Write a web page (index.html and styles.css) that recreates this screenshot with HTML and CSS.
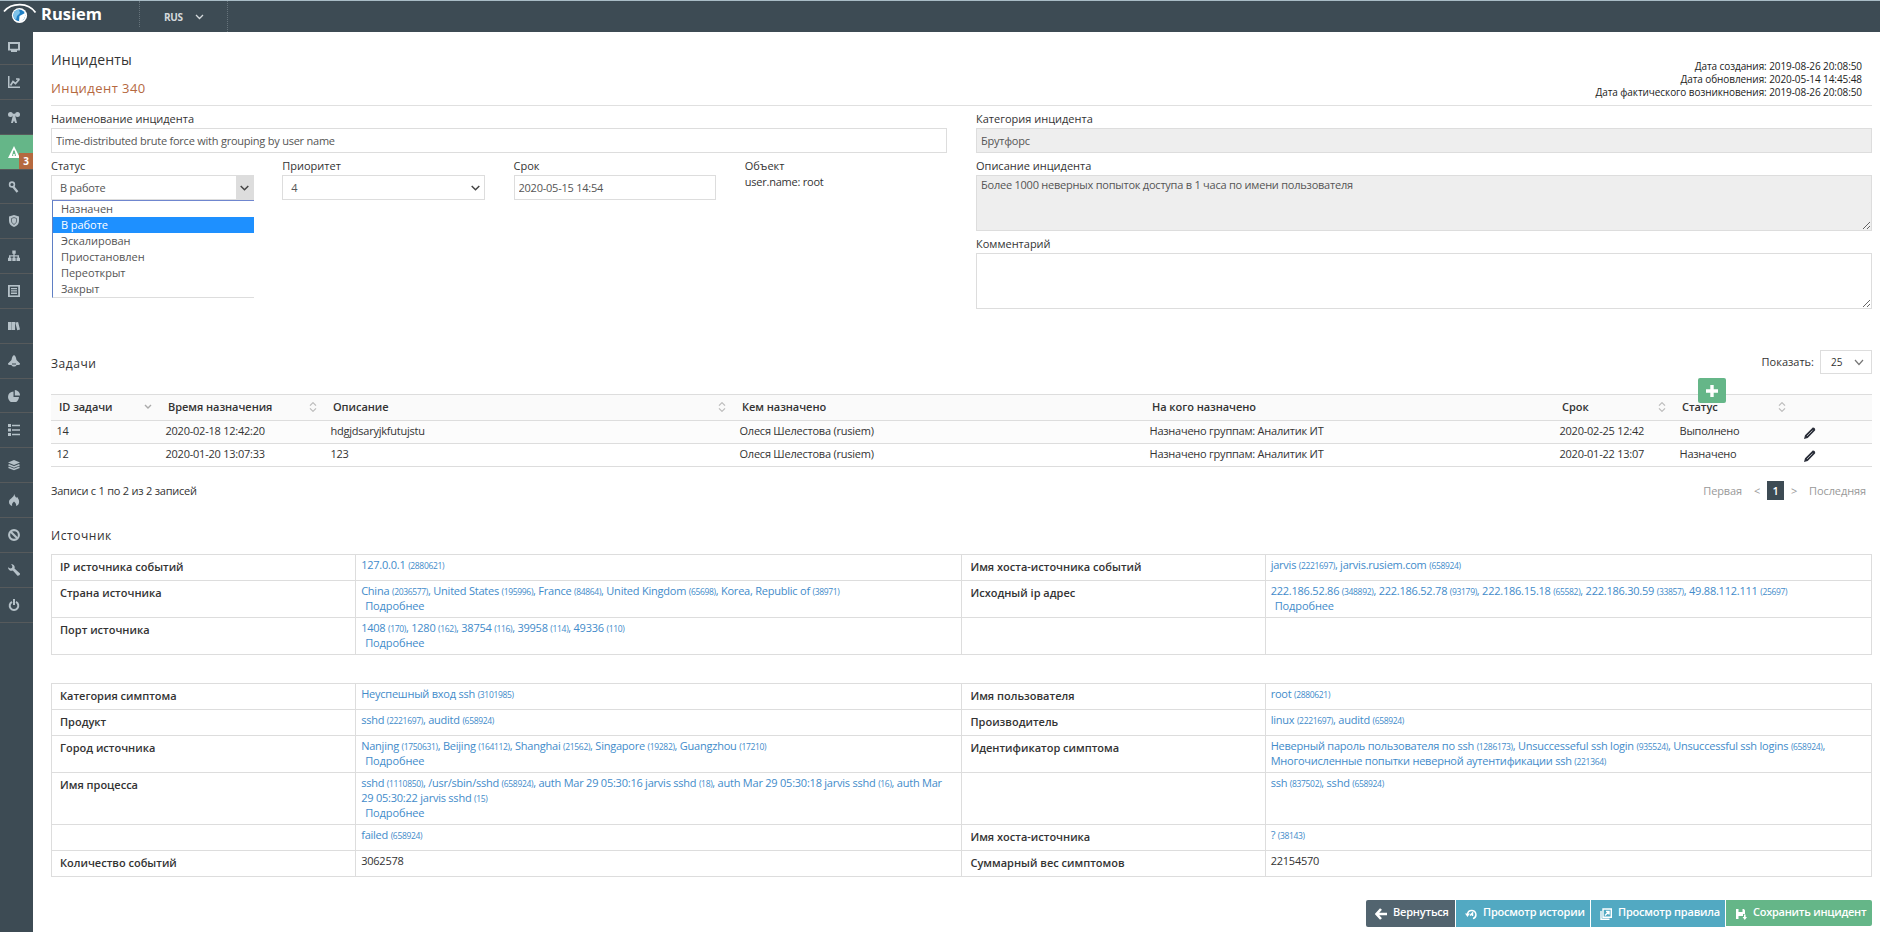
FILE: index.html
```html
<!DOCTYPE html>
<html lang="ru">
  <head>
    <meta charset="UTF-8" />
    <meta name="viewport" content="width=device-width, initial-scale=1.0" />
    <title>Rusiem - Инцидент 340</title>
    <link rel="stylesheet" href="styles.css">
  </head>
  <body>
    <header class="topbar">
      <a class="logo" href="#">
        <svg width="34" height="22" viewBox="0 0 34 22">
          <circle cx="16.500" cy="12.500" r="7.600" fill="#fff" />
          <circle cx="16.300" cy="12.300" r="5.900" fill="#1f7fc4" />
          <path d="M10.500 11a6 6 0 0 1 5.500-4.500L17 10l-3 3-1 4a6 6 0 0 1-2.500-6z" fill="#7fc3ea" />
          <path d="M16.500 13l5.500-3a6.500 6.500 0 0 1-6 8.500z" fill="#fff" />
          <path d="M1 8.500Q7 1.500 17 1.700T32.500 9.500" fill="none" stroke="#fff" stroke-width="1.800" />
        </svg>
        <span>Rusiem</span>
      </a>
      <div class="lang">
        <span>RUS</span>
        <svg width="9" height="6" viewBox="0 0 9 6"><path d="M1 1l3.500 3.500L8 1" fill="none" stroke="#d5dadd" stroke-width="1.300" /></svg>
      </div>
    </header>

    <div class="layout">
      <nav class="sidebar">
        <a href="#"><svg viewBox="0 0 12 12"><path d="M0 1h12v8.500H9V11H3V9.500H0zM2 3v4.700h8V3z" fill-rule="evenodd" /></svg></a>
        <a href="#"><svg viewBox="0 0 12 12"><path d="M0 0h1.500v10.500H12V12H0z" /><path d="M2.500 9.500l2.500-4 2.500 2L11.500 3M8 3h3.500" fill="none" stroke="currentColor" stroke-width="1.700" /></svg></a>
        <a href="#"><svg viewBox="0 0 12 12"><path d="M5 4h2l2 8H7.200L6 9.500 4.800 12H3z" /><circle cx="2.500" cy="3.500" r="2.500" /><circle cx="9.500" cy="3.500" r="2.500" /><circle cx="6" cy="4" r="1.500" /></svg></a>
        <a class="active" href="#"><svg viewBox="0 0 12 12"><path d="M6 0l6 12H0zM5.300 4.500L4 10h1.200V8h1.600v2H8L6.700 4.500z" fill-rule="evenodd" /></svg><b class="badge">3</b></a>
        <a href="#"><svg viewBox="0 0 12 12"><circle cx="4" cy="3.500" r="2.400" fill="none" stroke="currentColor" stroke-width="1.600" /><path d="M5 5.500L9.500 11" fill="none" stroke="currentColor" stroke-width="2.300" /></svg></a>
        <a href="#"><svg viewBox="0 0 12 12"><path d="M6 0l5 1.500V6c0 3-2 5-5 6-3-1-5-3-5-6V1.500z" /><path d="M6 2.500l2.500 1V6c0 1.500-1 2.700-2.500 3.500C4.500 8.700 3.500 7.500 3.500 6V3.500z" fill="none" stroke="#3d4b54" stroke-width=".7" /></svg></a>
        <a href="#"><svg viewBox="0 0 12 12"><path d="M4.300.5h3.400v3.300H6.700v1.400H11v2.600h1v3.200H8.500V7.800h1V6.500H6.700v1.300h1V11H4.300V7.800h1V6.500H2.500v1.300h1V11H0V7.800h1V5.200h4.300V3.800h-1z" /></svg></a>
        <a href="#"><svg viewBox="0 0 12 12"><path d="M0 0h12v12H0z" /><path d="M1.800 1.600h8.400v8.800H1.800z" fill="#3d4b54" /><path d="M3 3h6v1.300H3zM3 5.300h6v1.300H3zM3 7.600h6v1.500H3z" /></svg></a>
        <a href="#"><svg viewBox="0 0 12 12"><path d="M0 2h3.400v8H0zM3.700 2h3.400v8H3.700zM7.300 2.600l2.800-.7L12 9.400l-2.800.8z" /></svg></a>
        <a href="#"><svg viewBox="0 0 12 12"><path d="M6 0c2 1 2 3 2.500 5L12 8.500c.3 1-.6 1.500-1.500 1.500H8.500C8 12 4 12 3.500 10h-2C.6 10-.3 9.500 0 8.500L3.500 5C4 3 4 1 6 0zM4 8.500h4V9.500H4z" fill-rule="evenodd" /></svg></a>
        <a href="#"><svg viewBox="0 0 12 12"><path d="M5.500 1.500V7H11a5.500 5.500 0 1 1-5.500-5.500z" /><path d="M6.800 0A5.300 5.300 0 0 1 12 5.500H6.800z" /></svg></a>
        <a href="#"><svg viewBox="0 0 12 12"><path d="M0 0h3v3H0zM0 4.500h3v3H0zM0 9h3v3H0zM4 .8h8v1.500H4zM4 5.300h8v1.500H4zM4 9.800h8v1.500H4z" /></svg></a>
        <a href="#"><svg viewBox="0 0 12 12"><path d="M6 1l6 2.500L6 6 0 3.500z" /><path d="M.5 5.700L6 8l5.500-2.300M.5 8.200L6 10.500l5.500-2.300" fill="none" stroke="currentColor" stroke-width="1.600" /></svg></a>
        <a href="#"><svg viewBox="0 0 12 12"><path d="M6.300 0c.4 2 1.200 2.700 2 3.700L9.200 3C10.500 5 11.500 6.500 11 8.800c-.3 1.700-1.500 2.900-3 3.200.6-2-.6-3-2-4.500C4.600 9 3.500 10 4.200 12 2.400 11.500 1 10 1 8c0-3.500 4.800-4 5.300-8z" /></svg></a>
        <a href="#"><svg viewBox="0 0 12 12"><circle cx="6" cy="6" r="4.900" fill="none" stroke="currentColor" stroke-width="2.100" /><path d="M2.500 2.500l7 7" stroke="currentColor" stroke-width="2.100" /></svg></a>
        <a href="#"><svg viewBox="0 0 12 12"><path d="M3.200 0A3.400 3.400 0 0 1 6.500 4.600L12 9.500c.2 1.400-1 2.600-2.500 2.300L4.800 6.400A3.400 3.400 0 0 1 0 3.200l2.200 1.400 1.800-.5.400-1.900z" /></svg></a>
        <a href="#"><svg viewBox="0 0 12 12"><path d="M4 2.800a4.300 4.300 0 1 0 4 0" fill="none" stroke="currentColor" stroke-width="2" /><path d="M5 0h2v6H5z" /></svg></a>
      </nav>

      <main class="content">
        <div class="page-head">
          <div>
            <h1>Инциденты</h1>
            <h2>Инцидент 340</h2>
          </div>
          <div class="dates">
            <div>Дата создания: 2019-08-26 20:08:50</div>
            <div>Дата обновления: 2020-05-14 14:45:48</div>
            <div>Дата фактического возникновения: 2019-08-26 20:08:50</div>
          </div>
        </div>

        <form class="incident">
          <div class="col">
            <label for="name">Наименование инцидента</label>
            <input id="name" type="text" value="Time-distributed brute force with grouping by user name" />
            <div class="fields">
              <div class="field">
                <label>Статус</label>
                <div class="select open">
                  <span>В работе</span>
                  <i><svg width="9" height="6" viewBox="0 0 9 6"><path d="M.7 1l3.800 3.700L8.300 1" fill="none" stroke="#444" stroke-width="1.500" /></svg></i>
                  <ul class="options">
                    <li>Назначен</li>
                    <li class="selected">В работе</li>
                    <li>Эскалирован</li>
                    <li>Приостановлен</li>
                    <li>Переоткрыт</li>
                    <li>Закрыт</li>
                  </ul>
                </div>
              </div>
              <div class="field">
                <label>Приоритет</label>
                <div class="select">
                  <span>4</span>
                  <i><svg width="9" height="6" viewBox="0 0 9 6"><path d="M.7 1l3.800 3.700L8.300 1" fill="none" stroke="#444" stroke-width="1.500" /></svg></i>
                </div>
              </div>
              <div class="field">
                <label for="term">Срок</label>
                <input id="term" type="text" value="2020-05-15 14:54" />
              </div>
              <div class="field">
                <label>Объект</label>
                <div class="object">user.name: root</div>
              </div>
            </div>
          </div>
          <div class="col">
            <label for="category">Категория инцидента</label>
            <input id="category" type="text" value="Брутфорс" disabled />
            <label for="description">Описание инцидента</label>
            <textarea id="description" disabled>Более 1000 неверных попыток доступа в 1 часа по имени пользователя</textarea>
            <label for="comment">Комментарий</label>
            <textarea id="comment"></textarea>
          </div>
        </form>

        <div class="section-head">
          <h3>Задачи</h3>
          <div class="length">
            <span>Показать:</span>
            <div class="length-select">25
              <svg width="10" height="7" viewBox="0 0 10 7"><path d="M1 1l4 4.500L9 1" fill="none" stroke="#777" stroke-width="1.200" /></svg>
            </div>
          </div>
        </div>

        <div class="tasks-wrap">
          <button class="add"><svg width="12" height="12" viewBox="0 0 12 12"><path d="M4.300 0h3.400v4.300H12v3.400H7.700V12H4.300V7.700H0V4.300h4.300z" fill="#fff" /></svg></button>
          <table class="tasks">
            <colgroup>
              <col class="c-id"><col class="c-time"><col class="c-desc"><col class="c-by"><col class="c-to"><col class="c-term"><col class="c-status"><col>
            </colgroup>
            <thead>
              <tr>
                <th class="desc">ID задачи</th>
                <th class="sort">Время назначения</th>
                <th class="sort">Описание</th>
                <th>Кем назначено</th>
                <th>На кого назначено</th>
                <th class="sort">Срок</th>
                <th class="sort">Статус</th>
                <th></th>
              </tr>
            </thead>
            <tbody>
              <tr>
                <td>14</td>
                <td>2020-02-18 12:42:20</td>
                <td>hdgjdsaryjkfutujstu</td>
                <td>Олеся Шелестова (rusiem)</td>
                <td>Назначено группам: Аналитик ИТ</td>
                <td>2020-02-25 12:42</td>
                <td>Выполнено</td>
                <td class="edit"><svg viewBox="0 0 12 12"><path d="M0 12l1-3.700L8.300 1c1-1.200 3.700.7 2.700 2.500L3.700 11z" /><path d="M3 9l5.500-5.500" stroke="#fff" stroke-width=".6" /></svg></td>
              </tr>
              <tr>
                <td>12</td>
                <td>2020-01-20 13:07:33</td>
                <td>123</td>
                <td>Олеся Шелестова (rusiem)</td>
                <td>Назначено группам: Аналитик ИТ</td>
                <td>2020-01-22 13:07</td>
                <td>Назначено</td>
                <td class="edit"><svg viewBox="0 0 12 12"><path d="M0 12l1-3.700L8.300 1c1-1.200 3.700.7 2.700 2.500L3.700 11z" /><path d="M3 9l5.500-5.500" stroke="#fff" stroke-width=".6" /></svg></td>
              </tr>
            </tbody>
          </table>
        </div>

        <div class="table-foot">
          <span>Записи с 1 по 2 из 2 записей</span>
          <div class="pager">
            <a class="first">Первая</a>
            <a class="arrow">&lt;</a>
            <a class="current">1</a>
            <a class="arrow">&gt;</a>
            <a class="last">Последняя</a>
          </div>
        </div>

        <h3 class="source-title">Источник</h3>

        <table class="details">
          <tr>
            <th>IP источника событий</th>
            <td><a>127.0.0.1 <small>(2880621)</small></a></td>
            <th>Имя хоста-источника событий</th>
            <td><a>jarvis <small>(2221697)</small>, jarvis.rusiem.com <small>(658924)</small></a></td>
          </tr>
          <tr class="h2">
            <th>Страна источника</th>
            <td><a>China <small>(2036577)</small>, United States <small>(195996)</small>, France <small>(84864)</small>, United Kingdom <small>(65698)</small>, Korea, Republic of <small>(38971)</small></a><a class="more">Подробнее</a></td>
            <th>Исходный ip адрес</th>
            <td><a>222.186.52.86 <small>(348892)</small>, 222.186.52.78 <small>(93179)</small>, 222.186.15.18 <small>(65582)</small>, 222.186.30.59 <small>(33857)</small>, 49.88.112.111 <small>(25697)</small></a><a class="more">Подробнее</a></td>
          </tr>
          <tr class="h2">
            <th>Порт источника</th>
            <td><a>1408 <small>(170)</small>, 1280 <small>(162)</small>, 38754 <small>(116)</small>, 39958 <small>(114)</small>, 49336 <small>(110)</small></a><a class="more">Подробнее</a></td>
            <th></th>
            <td></td>
          </tr>
        </table>

        <table class="details">
          <tr>
            <th>Категория симптома</th>
            <td><a>Неуспешный вход ssh <small>(3101985)</small></a></td>
            <th>Имя пользователя</th>
            <td><a>root <small>(2880621)</small></a></td>
          </tr>
          <tr>
            <th>Продукт</th>
            <td><a>sshd <small>(2221697)</small>, auditd <small>(658924)</small></a></td>
            <th>Производитель</th>
            <td><a>linux <small>(2221697)</small>, auditd <small>(658924)</small></a></td>
          </tr>
          <tr class="h2">
            <th>Город источника</th>
            <td><a>Nanjing <small>(1750631)</small>, Beijing <small>(164112)</small>, Shanghai <small>(21562)</small>, Singapore <small>(19282)</small>, Guangzhou <small>(17210)</small></a><a class="more">Подробнее</a></td>
            <th>Идентификатор симптома</th>
            <td><a>Неверный пароль пользователя по ssh <small>(1286173)</small>, Unsuccesseful ssh login <small>(935524)</small>, Unsuccessful ssh logins <small>(658924)</small>,<br>Многочисленные попытки неверной аутентификации ssh <small>(221364)</small></a></td>
          </tr>
          <tr class="h3">
            <th>Имя процесса</th>
            <td><a>sshd <small>(1110850)</small>, /usr/sbin/sshd <small>(658924)</small>, auth Mar 29 05:30:16 jarvis sshd <small>(18)</small>, auth Mar 29 05:30:18 jarvis sshd <small>(16)</small>, auth Mar<br>29 05:30:22 jarvis sshd <small>(15)</small></a><a class="more">Подробнее</a></td>
            <th></th>
            <td><a>ssh <small>(837502)</small>, sshd <small>(658924)</small></a></td>
          </tr>
          <tr>
            <th></th>
            <td><a>failed <small>(658924)</small></a></td>
            <th>Имя хоста-источника</th>
            <td><a>? <small>(38143)</small></a></td>
          </tr>
          <tr>
            <th>Количество событий</th>
            <td>3062578</td>
            <th>Суммарный вес симптомов</th>
            <td>22154570</td>
          </tr>
        </table>

        <div class="actions">
          <button class="back"><svg viewBox="0 0 12 12"><path d="M6 1L1.500 6 6 11M2 6h10" fill="none" stroke="#fff" stroke-width="2.600" /></svg>Вернуться</button>
          <button class="info"><svg viewBox="0 0 12 12"><path d="M2.500 6a4.200 4.200 0 1 1 5.500 4.600M5 7.500L7.500 5v3" fill="none" stroke="#fff" stroke-width="1.500" /><path d="M0 5.500h5L2.500 9z" fill="#fff" /></svg>Просмотр истории</button>
          <button class="info"><svg viewBox="0 0 12 12"><path d="M3 1h8.300v8.300H3zM1 3v8.300h8.500M5 7.500L9 3.500M6 3.500h3v3" fill="none" stroke="#fff" stroke-width="1.400" /></svg>Просмотр правила</button>
          <button class="save"><svg viewBox="0 0 12 12"><path d="M1 1h2.500v3h4V1H9l1 1.500V6H8v2H3.500v3H1zM9 6.500h1.600V9H12l-2.200 3-2.200-3H9z" fill="#fff" /></svg>Сохранить инцидент</button>
        </div>
      </main>
    </div>
  </body>
</html>
```
FILE: styles.css
```css
* {
  box-sizing: border-box;
  margin: 0;
  padding: 0;
}

body {
  font-family: "Open Sans", sans-serif;
  font-size: 11px;
  line-height: 16px;
  letter-spacing: -0.23px;
  color: #333;
  background: #fff;
  overflow: hidden;
}

a {
  text-decoration: none;
}

.topbar {
  display: flex;
  height: 32px;
  background: #3d4b54;
  border-top: 1px solid #a9bcc6;
  letter-spacing: 0;
}

.logo {
  display: flex;
  width: 140px;
  height: 26px;
  padding: 2px 0 0 3px;
  border-right: 1px dotted #66737b;
  color: #fff;
  font-size: 16.5px;
  font-weight: 700;
  line-height: 22px;

  > span {
    margin-left: 4px;
  }
}

.lang {
  display: flex;
  align-items: center;
  gap: 12px;
  width: 88px;
  padding-left: 24px;
  border-right: 1px dotted #66737b;
  color: #d5dadd;
  font-size: 10px;
  font-weight: 700;
  letter-spacing: -0.3px;
}

.layout {
  display: flex;
  height: 900px;
}

.sidebar {
  width: 33px;
  background: #3d4b54;
  color: #b5c1c8;

  > a {
    display: block;
    position: relative;
    height: 34.85px;
    padding: 11px 0 0 8px;
    border-bottom: 1px solid #565a5c;
    color: inherit;

    &:first-child {
      height: 33px;
      padding-top: 9px;
    }

    &.active {
      background: #65b688;
      color: #fff;
    }

    > svg {
      display: block;
      width: 12px;
      height: 12px;
      fill: currentColor;
    }
  }
}

.badge {
  position: absolute;
  right: 0;
  bottom: 0;
  width: 14px;
  height: 16px;
  background: #b5693f;
  font-size: 10px;
  text-align: center;
}

.content {
  flex: 1;
  padding: 0 8px 0 18px;
}

.page-head {
  display: flex;
  justify-content: space-between;
  height: 74px;
  border-bottom: 1px solid #e0e0e0;

  h1 {
    margin-top: 18px;
    font-size: 14px;
    font-weight: 400;
    line-height: 20px;
    letter-spacing: 0.2px;
  }

  h2 {
    margin-top: 8px;
    color: #b5693f;
    font-size: 13px;
    font-weight: 500;
    line-height: 20px;
    letter-spacing: 0.45px;
  }
}

.dates {
  padding: 28px 10px 0 0;
  color: #222;
  font-size: 10px;
  line-height: 13px;
  letter-spacing: -0.08px;
  text-align: right;
}

.incident {
  display: grid;
  grid-template-columns: 1fr 1fr;
  gap: 29px;
  height: 239px;

  label {
    display: block;
    height: 22px;
    padding-top: 5px;
    font-weight: 500;
    line-height: 16px;
    letter-spacing: 0;
  }

  input,
  textarea {
    display: block;
    width: 100%;
    height: 25px;
    border: 1px solid #ddd;
    background: #fff;
    color: #555;
    font: inherit;
    letter-spacing: inherit;
    padding: 0 4px;
  }

  textarea {
    height: 56px;
    padding-top: 1px;
  }

  input:disabled,
  textarea:disabled {
    background: #eee;
  }
}

.fields {
  display: grid;
  grid-template-columns: repeat(4, 1fr);
  gap: 29px;
}

.object {
  line-height: 13px;
}

.select {
  position: relative;
  display: flex;
  height: 25px;
  border: 1px solid #ddd;
  color: #555;
  line-height: 24px;

  > span {
    flex: 1;
    padding-left: 8px;
  }

  > i {
    display: flex;
    align-items: center;
    justify-content: center;
    width: 17px;
  }

  &.open {
    margin-right: -1px;
  }

  &.open > i {
    background: #ddd;
  }
}

.options {
  position: absolute;
  top: 24px;
  left: 0;
  right: -1px;
  border-top: 1px solid #6f86cf;
  border-left: 1px solid #5f7fc4;
  border-bottom: 1px solid #ddd;
  background: #fff;
  letter-spacing: -0.05px;
  list-style: none;

  > li {
    height: 16px;
    padding-left: 8px;
    line-height: 16px;
  }

  > .selected {
    background: #1e90ff;
    color: #fff;
  }
}

h3 {
  font-size: 12px;
  font-weight: 500;
  letter-spacing: 0.55px;
}

.section-head {
  display: flex;
  justify-content: space-between;
  height: 49px;
  padding-top: 5px;

  > h3 {
    margin-top: 6px;
  }
}

.length {
  display: flex;
  gap: 6px;
  height: 24px;
  line-height: 24px;
  letter-spacing: 0;
}

.length-select {
  display: flex;
  align-items: center;
  justify-content: space-between;
  width: 52px;
  padding: 0 7px 0 10px;
  border: 1px solid #ddd;
  font-size: 10px;
}

.tasks-wrap {
  position: relative;
}

.add {
  position: absolute;
  top: -16px;
  left: 1647px;
  width: 28px;
  height: 25px;
  border: 0;
  border-radius: 2px;
  background: #65b688;
  line-height: 0;
}

table {
  width: 1821px;
  border-collapse: collapse;
  table-layout: fixed;
}

.tasks {
  th {
    height: 26px;
    padding: 0 0 1px 8px;
    border-top: 1px solid #ddd;
    border-bottom: 1px solid #ddd;
    background: #fafafa;
    font-weight: 600;
    letter-spacing: -0.05px;
    text-align: left;
  }

  td {
    height: 23px;
    padding: 0 0 3px 5.5px;
    border-bottom: 1px solid #ddd;
  }

  tbody tr:first-child {
    background: #fcfcfc;
  }

  .edit {
    padding: 1px 0 0 10px;
    line-height: 0;

    > svg {
      width: 12px;
      height: 12px;
      fill: #2b2f3a;
    }
  }
}

.c-id { width: 109px; }
.c-time { width: 165px; }
.c-desc { width: 409px; }
.c-by { width: 410px; }
.c-to { width: 410px; }
.c-term { width: 120px; }
.c-status { width: 120px; }

.tasks .sort {
  background: #fafafa url("data:image/svg+xml,%3Csvg xmlns='http://www.w3.org/2000/svg' width='8' height='10' fill='none' stroke='%23bbb' stroke-width='1.2'%3E%3Cpath d='M1 3.700l3-3 3 3M1 6.300l3 3 3-3'/%3E%3C/svg%3E") no-repeat right 8px top 7px;
}

.tasks .desc {
  background: #fafafa url("data:image/svg+xml,%3Csvg xmlns='http://www.w3.org/2000/svg' width='8' height='6' fill='none' stroke='%23aaa' stroke-width='1.4'%3E%3Cpath d='M1 1l3 3 3-3'/%3E%3C/svg%3E") no-repeat right 8px top 9px;
}

.table-foot {
  display: flex;
  justify-content: space-between;
  height: 61px;
  padding-top: 14px;
  line-height: 19px;
}

.pager {
  display: flex;
  color: #999;
  letter-spacing: -0.1px;

  > a {
    height: 19px;
  }

  > .first {
    margin-right: 5px;
  }

  > .arrow {
    width: 20px;
    text-align: center;
  }

  > .current {
    width: 17px;
    background: #3d4b54;
    color: #fff;
    font-weight: 600;
    text-align: center;
  }

  > .last {
    margin: 0 6px 0 5px;
  }
}

.source-title {
  height: 26px;
}

.details {
  margin-bottom: 28px;

  th,
  td {
    height: 26px;
    border: 1px solid #ddd;
    text-align: left;
    vertical-align: top;
    line-height: 15px;
  }

  th {
    width: 304px;
    padding: 4px 8px;
    font-weight: 600;
    letter-spacing: 0;
  }

  td {
    width: 606px;
    padding: 2px 5px;
    white-space: nowrap;
  }

  th:nth-child(3) {
    width: 303px;
  }

  .h2 td {
    height: 37px;
  }

  .h3 td {
    height: 52px;
  }

  a {
    color: #428bca;
  }

  small {
    font-size: 8.5px;
    font-weight: 500;
    line-height: 0;
    letter-spacing: -0.33px;
  }

  .more {
    display: block;
    padding-left: 4px;
    letter-spacing: -0.1px;
  }
}

.actions {
  display: flex;
  justify-content: flex-end;
  gap: 1px;
  margin-top: -5px;

  > button {
    display: flex;
    align-items: center;
    height: 27px;
    border: 0;
    padding: 0 0 4px 9px;
    color: #fff;
    font: 600 11px "Open Sans", sans-serif;
    letter-spacing: -0.2px;
    white-space: nowrap;

    > svg {
      flex-shrink: 0;
      width: 12px;
      height: 12px;
      margin: 5px 6px 0 0;
    }
  }

  > .back {
    width: 89px;
    border-radius: 2px 0 0 2px;
    background: #52646f;
  }

  > .info {
    width: 134px;
    background: #52a9c2;
  }

  > .save {
    width: 146px;
    height: 26px;
    padding-bottom: 3px;
    letter-spacing: -0.25px;
    border-radius: 0 2px 2px 0;
    background: #65b688;
  }
}
```
